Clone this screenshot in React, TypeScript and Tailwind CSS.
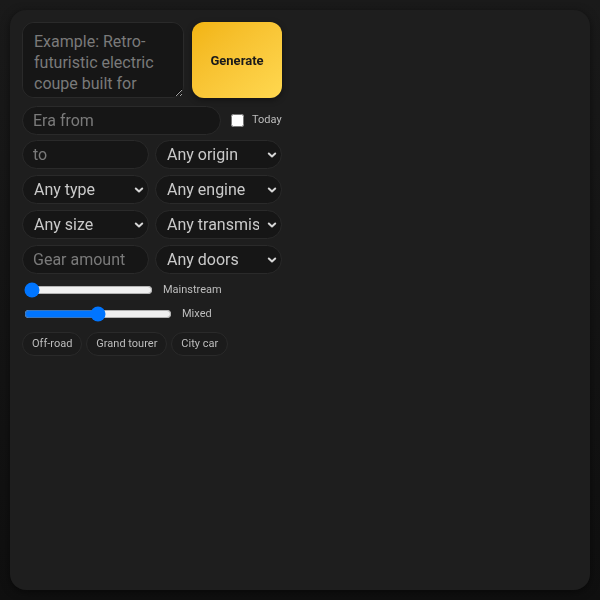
import React from "react";

const Chevron = () => (
  <svg className="pointer-events-none absolute right-[5px] top-1/2 -translate-y-1/2" width="10" height="10" viewBox="0 0 10 10" fill="none">
    <path d="M1.8 3.5 L5 6.5 L8.2 3.5" stroke="#d6d6d6" strokeWidth="2" strokeLinecap="round" strokeLinejoin="round" />
  </svg>
);

const Select = ({ label }: { label: string }) => (
  <div className="relative">
    <select className="h-[29px] w-full appearance-none rounded-full border border-[#2a2a2a] bg-[#161616] pl-[11px] pr-[22px] text-[16px] text-[#cacaca] outline-none" defaultValue={label}>
      <option>{label}</option>
    </select>
    <Chevron />
  </div>
);

const Input = ({ ph, cls = "" }: { ph: string; cls?: string }) => (
  <input
    placeholder={ph}
    className={`h-[29px] rounded-full border border-[#2a2a2a] bg-[#161616] px-[10px] text-[16px] text-[#cacaca] placeholder-[#7a7a7a] outline-none ${cls}`}
  />
);

export default function App() {
  return (
    <div className="min-h-[600px] w-full bg-gradient-to-b from-[#1a1a1a] to-[#0f0f0f] p-[10px]" style={{ fontFamily: "Roboto, 'Noto Sans', sans-serif" }}>
      <div className="h-[580px] rounded-2xl bg-[#1e1e1e] p-[12px] shadow-[0_2px_8px_rgba(0,0,0,0.5)]">
        <div className="flex w-[260px] flex-col">
          <div className="flex gap-[8px]">
            <textarea
              placeholder="Example: Retro-futuristic electric coupe built for"
              className="h-[76px] w-[162px] rounded-[12px] border border-[#2a2a2a] bg-[#161616] px-[11px] py-[8px] text-[16px] leading-[21px] text-[#cacaca] placeholder-[#7a7a7a] outline-none"
            />
            <button className="h-[76px] w-[90px] rounded-[12px] bg-gradient-to-br from-[#f2b410] to-[#ffd84f] pt-[1px] text-[13px] font-bold text-[#1a1a1a] shadow-[0_2px_6px_rgba(0,0,0,0.4)]">
              Generate
            </button>
          </div>
          <div className="mt-[8px] flex items-center">
            <Input ph="Era from" cls="h-[28px] w-[199px]" />
            <input type="checkbox" className="ml-[10px] h-[13px] w-[13px]" />
            <span className="ml-[8px] text-[11px] text-[#bdbdbd]">Today</span>
          </div>
          <div className="mt-[5px] grid grid-cols-2 gap-[6px]">
            <Input ph="to" cls="w-full" />
            <Select label="Any origin" />
            <Select label="Any type" />
            <Select label="Any engine" />
            <Select label="Any size" />
            <Select label="Any transmission" />
            <Input ph="Gear amount" cls="w-full" />
            <Select label="Any doors" />
          </div>
          <div className="mt-[6px] flex items-center">
            <input type="range" min={0} max={100} defaultValue={0} className="m-[2px] w-[129px]" />
            <span className="ml-[8px] text-[11px] text-[#bdbdbd]">Mainstream</span>
          </div>
          <div className="mt-[4px] flex items-center">
            <input type="range" min={0} max={100} defaultValue={50} className="m-[2px] w-[148px]" />
            <span className="ml-[8px] text-[11px] text-[#bdbdbd]">Mixed</span>
          </div>
          <div className="mt-[8px] flex gap-[4px]">
            {["Off-road", "Grand tourer", "City car"].map((c) => (
              <span key={c} className="flex h-[24px] items-center rounded-full border border-[#2a2a2a] bg-[#1b1b1b] px-[9px] text-[11px] text-[#bdbdbd]">
                {c}
              </span>
            ))}
          </div>
        </div>
      </div>
    </div>
  );
}
